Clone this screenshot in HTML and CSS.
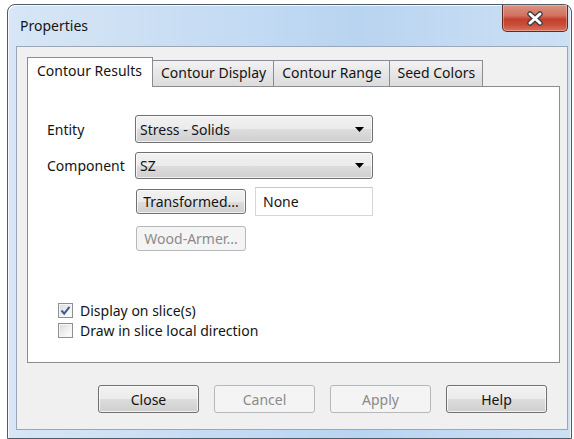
FILE: index.html
```html
<!DOCTYPE html>
<html lang="en">
<head>
<meta charset="utf-8">
<title>Properties</title>
<link rel="stylesheet" href="styles.css">
</head>
<body>
<div class="window">
  <div class="titlebar">
    <span class="title">Properties</span>
    <button class="close-btn" aria-label="Close">
      <svg width="20" height="15" viewBox="0 0 20 15">
        <path d="M5 3 L15 12 M15 3 L5 12" stroke="#3d3d3d" stroke-width="5.5" stroke-linecap="round" fill="none"/>
        <path d="M5 3 L15 12 M15 3 L5 12" stroke="#ffffff" stroke-width="3" stroke-linecap="round" fill="none"/>
      </svg>
    </button>
  </div>

  <div class="client">
    <div class="tabs">
      <div class="tabstrip">
        <div class="tab tab-active">Contour Results</div>
        <div class="tab">Contour Display</div>
        <div class="tab">Contour Range</div>
        <div class="tab">Seed Colors</div>
      </div>

      <div class="pane">
        <div class="fields">
          <span class="label">Entity</span>
          <div class="combo combo-first">
            <span>Stress - Solids</span>
            <svg class="combo-arrow" width="9" height="5" viewBox="0 0 9 5"><path d="M0 0 H9 L4.5 5 Z" fill="#000"/></svg>
          </div>
          <span class="label">Component</span>
          <div class="combo">
            <span>SZ</span>
            <svg class="combo-arrow" width="9" height="5" viewBox="0 0 9 5"><path d="M0 0 H9 L4.5 5 Z" fill="#000"/></svg>
          </div>
        </div>

        <div class="action-row">
          <button class="btn btn-small">Transformed...</button>
          <div class="textbox">None</div>
        </div>
        <div class="action-row action-row-second">
          <button class="btn btn-small" disabled>Wood-Armer...</button>
        </div>

        <div class="checks">
          <label class="check">
            <span class="checkbox">
              <svg width="11" height="11" viewBox="0 0 11 11"><path d="M1.5 5.5 L4.2 8.6 L9.5 1.8" stroke="#3e5a94" stroke-width="2" fill="none"/></svg>
            </span>
            Display on slice(s)
          </label>
          <label class="check">
            <span class="checkbox"></span>
            Draw in slice local direction
          </label>
        </div>
      </div>
    </div>

    <div class="buttons">
      <button class="btn btn-dialog">Close</button>
      <button class="btn btn-dialog" disabled>Cancel</button>
      <button class="btn btn-dialog" disabled>Apply</button>
      <button class="btn btn-dialog">Help</button>
    </div>
  </div>
</div>
</body>
</html>
```

FILE: styles.css
```css
* {
  box-sizing: border-box;
}

html,
body {
  margin: 0;
}

body {
  width: 574px;
  height: 439px;
  overflow: hidden;
  padding: 4px 0 0 7px;
  background: #ffffff;
  font-family: "Noto Sans", "Open Sans", sans-serif;
  font-size: 14px;
  color: #141414;
}

/* Aero-style window frame */
.window {
  width: 565px;
  height: 435px;
  display: flex;
  flex-direction: column;
  padding: 0 3px 8px 8px;
  border: 1px solid #505b68;
  border-radius: 8px 8px 0 0;
  background: linear-gradient(to right, #d8e6f5 0%, #c4dbf3 40%, #b9d4f1 62%, #cde0f4 100%);
  box-shadow: inset 1px 1px 0 rgba(255, 255, 255, 0.8), inset -1px 0 0 rgba(255, 255, 255, 0.6);
}

.titlebar {
  height: 41px;
  flex: none;
  display: flex;
  justify-content: space-between;
  align-items: flex-start;
  padding-left: 4px;
}

.title {
  margin-top: 12px;
  line-height: 18px;
}

.close-btn {
  width: 66px;
  height: 27px;
  padding: 0;
  display: flex;
  align-items: center;
  justify-content: center;
  border: 1px solid #5e2b23;
  border-top: none;
  border-radius: 0 0 5px 5px;
  background: linear-gradient(#dc9383 0%, #d27260 40%, #c4402b 55%, #c84c37 75%, #d8735f 100%);
  box-shadow: inset 0 0 0 1px rgba(255, 220, 210, 0.4);
}

.client {
  flex: 1;
  display: flex;
  flex-direction: column;
  padding: 10px 7px 0 10px;
  background: #f0f0f0;
  border: 1px solid #9ba7b6;
}

/* Tab control */
.tabstrip {
  height: 30px;
  display: flex;
  align-items: flex-end;
  margin-bottom: -1px;
  position: relative;
  z-index: 1;
}

.tab {
  height: 27px;
  padding: 3px 7px 0 8px;
  line-height: 18px;
  white-space: nowrap;
  border: 1px solid #898c95;
  border-left: none;
  background: linear-gradient(#f3f3f3 0%, #e6e6e6 50%, #dcdcdc 100%);
}

.tab-active {
  height: 30px;
  padding: 4px 10px 0 9px;
  border-left: 1px solid #898c95;
  border-bottom: none;
  background: #ffffff;
}

.pane {
  height: 277px;
  padding: 28px 0 0 19px;
  border: 1px solid #898c95;
  background: #ffffff;
}

.fields {
  display: grid;
  grid-template-columns: 88px 238px;
  row-gap: 9px;
  align-items: center;
}

.combo {
  height: 27px;
  display: flex;
  align-items: center;
  justify-content: space-between;
  padding: 0 8px 0 4px;
  border: 1px solid #707070;
  border-radius: 3px;
  background: linear-gradient(#f2f2f2 0%, #ebebeb 50%, #dddddd 51%, #cfcfcf 100%);
  box-shadow: inset 0 0 0 1px rgba(255, 255, 255, 0.7);
}

.combo-first {
  height: 28px;
}

.action-row {
  display: flex;
  align-items: center;
  gap: 9px;
  margin: 8px 0 0 89px;
}

.action-row-second {
  margin-top: 10px;
}

.btn {
  padding: 0;
  font: inherit;
  color: #141414;
  border: 1px solid #707070;
  border-radius: 3px;
  background: linear-gradient(#f2f2f2 0%, #ebebeb 50%, #dddddd 51%, #cfcfcf 100%);
  box-shadow: inset 0 0 0 1px rgba(255, 255, 255, 0.7);
}

.btn:disabled {
  color: #8b8b8b;
  border-color: #b5b9bc;
  background: #f4f4f4;
  box-shadow: none;
}

.btn-small {
  width: 110px;
  height: 25px;
  line-height: 21px;
}

.textbox {
  width: 118px;
  height: 29px;
  padding-left: 7px;
  line-height: 27px;
  border: 1px solid #d4d8de;
  border-top-color: #c4c8cf;
  background: #ffffff;
}

.checks {
  margin: 49px 0 0 11px;
  display: flex;
  flex-direction: column;
}

.check {
  height: 20px;
  display: flex;
  align-items: center;
  gap: 7px;
}

.checkbox {
  width: 15px;
  height: 15px;
  display: flex;
  align-items: center;
  justify-content: center;
  border: 1px solid #8e8f8f;
  background: linear-gradient(135deg, #d9d9d9 0%, #f2f2f2 60%, #ffffff 100%);
  box-shadow: inset 0 0 0 1px #f6f6f6;
}

/* Dialog command buttons */
.buttons {
  display: flex;
  justify-content: flex-end;
  gap: 15px;
  margin-top: 22px;
  padding-right: 13px;
}

.btn-dialog {
  width: 101px;
  height: 28px;
}
```
